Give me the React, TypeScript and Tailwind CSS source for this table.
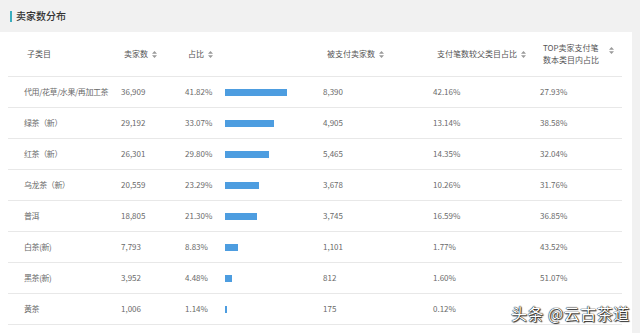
const rows = [
  { name: "代用/花草/水果/再加工茶", sellers: "36,909", pct: 41.82, paid: "8,390", parent: "42.16%", top: "27.93%" },
  { name: "绿茶（新）", sellers: "29,192", pct: 33.07, paid: "4,905", parent: "13.14%", top: "38.58%" },
  { name: "红茶（新）", sellers: "26,301", pct: 29.8, paid: "5,465", parent: "14.35%", top: "32.04%" },
  { name: "乌龙茶（新）", sellers: "20,559", pct: 23.29, paid: "3,678", parent: "10.26%", top: "31.76%" },
  { name: "普洱", sellers: "18,805", pct: 21.3, paid: "3,745", parent: "16.59%", top: "36.85%" },
  { name: "白茶(新)", sellers: "7,793", pct: 8.83, paid: "1,101", parent: "1.77%", top: "43.52%" },
  { name: "黑茶(新)", sellers: "3,952", pct: 4.48, paid: "812", parent: "1.60%", top: "51.07%" },
  { name: "黄茶", sellers: "1,006", pct: 1.14, paid: "175", parent: "0.12%", top: "" },
];

const Sort = () => (
  <svg width="5" height="7" viewBox="0 0 5 7" className="ml-[4px] inline-block">
    <path d="M2.5 0 L5 2.8 L0 2.8 Z M2.5 7 L5 4.2 L0 4.2 Z" fill="#9a9a9a" />
  </svg>
);

const App = () => {
  return (
    <div
      className="relative w-[640px] h-[333px] overflow-hidden bg-[#f1f1f1] text-[#6a6a6a] text-[8px]"
      style={{ fontFamily: '"Noto Sans CJK SC", "Noto Sans", sans-serif' }}
    >
      <div className="h-[32px] flex items-center pl-[10px]">
        <div className="w-[2px] h-[11px] bg-[#3aaebf] mr-[4px]" />
        <span className="text-[10px] text-[#333] font-medium leading-none">卖家数分布</span>
      </div>
      <div className="w-[632px] h-[301px] bg-white pl-[8px]">
        <div className="w-[614px]">
          <div className="flex h-[45px] items-center border-b border-[#e8e8e8] text-[#555]">
            <div className="w-[113px] pl-[19px]">子类目</div>
            <div className="w-[64px] pl-[3px] flex items-center">卖家数<Sort /></div>
            <div className="w-[40px] pl-[3px] flex items-center">占比<Sort /></div>
            <div className="w-[98px]" />
            <div className="w-[110px] pl-[4px] flex items-center">被支付卖家数<Sort /></div>
            <div className="w-[107px] pl-[4px] flex items-center">支付笔数较父类目占比<Sort /></div>
            <div className="w-[82px] pl-[3px] flex items-start">
              <span className="leading-[12px]">TOP卖家支付笔<br />数本类目内占比</span>
              <span className="ml-[6px] mt-[2px]"><Sort /></span>
            </div>
          </div>
          {rows.map((r, i) => (
            <div key={i} className="flex h-[31px] items-center border-b border-[#e8e8e8]">
              <div className="w-[113px] pl-[16px] whitespace-nowrap tracking-[-0.4px]">{r.name}</div>
              <div className="w-[64px]">{r.sellers}</div>
              <div className="w-[40px]">{r.pct.toFixed(2)}%</div>
              <div className="w-[98px] flex items-center">
                <div className="h-[7px] bg-[#4d9de0]" style={{ width: `${Math.max(1, r.pct * 1.48)}px` }} />
              </div>
              <div className="w-[110px]">{r.paid}</div>
              <div className="w-[107px]">{r.parent}</div>
              <div className="w-[82px]">{r.top}</div>
            </div>
          ))}
        </div>
      </div>
      <div className="absolute left-[511px] top-[301px] text-[16px] text-white tracking-[0.5px] [text-shadow:0_0_1px_#000,0_0_1px_#000,1px_1px_1px_#333]">
        头条 @云古茶道
      </div>
    </div>
  );
};

export default App;
